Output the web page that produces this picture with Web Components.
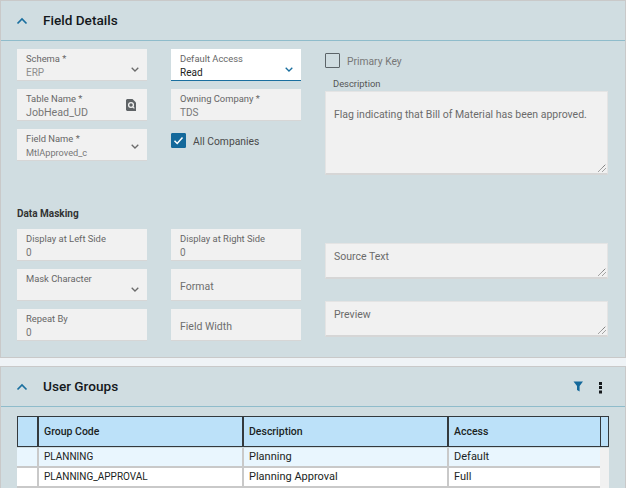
<!DOCTYPE html>
<html>
<head>
<meta charset="utf-8">
<title>Field Details</title>
<style>
    html, body { margin: 0; padding: 0; }
    body {
        background: #eff3f6;
        width: 626px;
        height: 488px;
        overflow: hidden;
        font-family: "Roboto", "Noto Sans", sans-serif;
    }
</style>
</head>
<body>
<template id="panel_template">
    <style>
        :host { display: block; background: #d0dde1; border: 1px solid #c9c9c9; }
        header { display: flex; align-items: center; height: 39px; border-bottom: 1px solid #8fbccb; padding: 0 15px 0 15px; }
        header svg.caret { width: 12px; height: 8px; margin-right: 15px; }
        h2 { margin: -2px 0 0; flex: 1; font-size: 13.6px; font-weight: 500; color: #14181c; }
        .content { padding: var(--content-top, 8px) 16px 16px; }
    </style>
    <header>
        <svg class="caret" viewBox="0 0 12 8"><path d="M1.5 6.5 6 2l4.5 4.5" fill="none" stroke="#1a6f9f" stroke-width="1.7"/></svg>
        <h2 id="title"></h2>
        <slot name="tools"></slot>
    </header>
    <div class="content"><slot></slot></div>
</template>

<template id="field_template">
    <style>
        :host { display: block; box-sizing: border-box; height: 32px; background: #f1f1f1; border-bottom: 1px solid #d6d6d6; position: relative; padding: 4px 9px; color: #6b6b6b; }
        :host([active]) { background: #fff; border-bottom: 1px solid #1a6f9f; }
        .label { font-size: 9.4px; line-height: 12px; margin-bottom: 1px; color: #666; white-space: nowrap; }
        .value { font-size: var(--value-size, 10px); line-height: 14px; margin-top: var(--value-gap, 0); color: var(--value-color, #777); white-space: nowrap; }
        :host([active]) .value { color: #222; }
        .big { font-size: 10.5px; color: #6e6e6e; line-height: 28px; white-space: nowrap; }
        svg { position: absolute; right: 8px; top: var(--chev-top, 18px); width: 8px; height: 5px; }
    </style>
    <div id="body"></div>
</template>

<template id="area_template">
    <style>
        :host { display: block; position: relative; box-sizing: border-box; background: #f1f1f1; border: 1px solid #e4e4e4; border-bottom: 2px solid #d6d6d6; padding: 6px 8px; font-size: 10.5px; line-height: 14px; color: #6b6b6b; }
        svg { position: absolute; right: 1px; bottom: 1px; width: 8px; height: 8px; }
    </style>
    <slot></slot>
    <svg viewBox="0 0 8 8"><path d="M.5 7.5 7.5.5M4.5 7.5l3-3" stroke="#555" stroke-width="1" stroke-dasharray="1 .6" fill="none"/></svg>
</template>

<template id="check_template">
    <style>
        :host { display: flex; align-items: center; gap: 7px; font-size: 10.3px; color: #4a4a4a; }
        .box { box-sizing: border-box; width: 15px; height: 15px; border: 1px solid #5c6468; border-radius: 1px; display: block; }
        :host([checked]) .box { background: #14699b; border-color: #14699b; }
        svg { display: block; width: 13px; height: 13px; }
        :host([disabled]) { color: #777; }
        .text { padding-top: 1px; }
    </style>
    <span class="box"><svg viewBox="0 0 13 13" id="tick"><path d="M2.5 6.8 5.2 9.5 10.5 3.5" fill="none" stroke="#fff" stroke-width="1.5"/></svg></span>
    <span class="text"><slot></slot></span>
</template>

<template id="grid_template">
    <style>
        :host { display: block; font-size: 11px; color: #1b1f23; width: 592px; }
        .row { display: grid; grid-template-columns: 20px 205px 205px 153px 9px; }
        .head { height: 31px; background: #bce1f9; border: 1px solid #33393d; box-sizing: border-box; grid-template-columns: 19px 205px 205px 153px 8px; font-size: 10.5px; }
        .head div { border-left: 2px solid #33393d; padding-left: 5px; line-height: 30px; font-weight: 500; box-sizing: border-box; }
        .head div:first-child { border-left: 0; }
        .head div:last-child { border-left-width: 1px; padding: 0; }
        .data { height: 20px; margin-top: 1px; box-sizing: border-box; }
        .data + .data { margin-top: 0; }
        .data div { border-left: 2px solid #c9c9c9; border-bottom: 2px solid #c9c9c9; padding-left: 5px; line-height: 17px; box-sizing: border-box; white-space: nowrap; background: var(--row); }
        .data div:first-child { border-left: 0; }
        .data div:nth-child(2) { font-size: 10px; }
        .data div:last-child { background: #f1f1f1; border: 0; padding: 0; }
        .tint { --row: #e9f6fe; }
        .plain { --row: #fff; }
    </style>
    <div class="row head"><div></div><div>Group Code</div><div>Description</div><div>Access</div><div></div></div>
    <div class="row data tint"><div></div><div>PLANNING</div><div>Planning</div><div>Default</div><div></div></div>
    <div class="row data plain"><div></div><div>PLANNING_APPROVAL</div><div>Planning Approval</div><div>Full</div><div></div></div>
</template>

<template id="details_template">
    <style>
        :host { display: grid; grid-template-columns: 130px 130px 283px; column-gap: 24px; }
        h3 { grid-column: 1 / 3; font-size: 10px; line-height: 14px; font-weight: 700; color: #333; margin: 32px 0 8px; }
        .stack { display: flex; flex-direction: column; gap: 8px; }
        .key { margin: 4px 0 0; }
        .desc-label { font-size: 9.4px; line-height: 12px; color: #555; margin: 10px 0 1px 8px; }
        .companies { margin-top: 4px; }
        .lower { padding-top: 14px; gap: 22px; }
    </style>
    <div class="stack">
        <form-field label="Schema *" value="ERP" select style="--value-color:#8e8e8e"></form-field>
        <form-field label="Table Name *" value="JobHead_UD" search style="--value-gap:1px;--value-size:10.7px"></form-field>
        <form-field label="Field Name *" value="MtlApproved_c" select style="--chev-top:15px;--value-size:9.2px"></form-field>
    </div>
    <div class="stack">
        <form-field label="Default Access" value="Read" select active></form-field>
        <form-field label="Owning Company *" value="TDS" style="--value-gap:1px"></form-field>
        <form-check class="companies" checked>All Companies</form-check>
    </div>
    <div>
        <form-check class="key" disabled>Primary Key</form-check>
        <div class="desc-label">Description</div>
        <form-area style="height:84px;padding-top:16px">Flag indicating that Bill of Material has been approved.</form-area>
    </div>
    <h3>Data Masking</h3>
    <div></div>
    <div class="stack">
        <form-field label="Display at Left Side" value="0"></form-field>
        <form-field label="Mask Character" value="" select></form-field>
        <form-field label="Repeat By" value="0"></form-field>
    </div>
    <div class="stack">
        <form-field label="Display at Right Side" value="0"></form-field>
        <form-field placeholder="Format"></form-field>
        <form-field placeholder="Field Width"></form-field>
    </div>
    <div class="stack lower">
        <form-area style="height:36px">Source Text</form-area>
        <form-area style="height:36px">Preview</form-area>
    </div>
</template>

<app-panel title="Field Details" style="height:358px;box-sizing:border-box">
    <field-details></field-details>
</app-panel>
<div style="height:8px"></div>
<app-panel title="User Groups" style="--content-top:9px">
    <svg slot="tools" width="38" height="14" viewBox="0 0 38 14" style="display:block">
        <path d="M1.5 1.5h9.5L7.6 6v5.5L5 10V6z" fill="#14699b"/>
        <rect x="27" y="2" width="3" height="3" fill="#15191c"/><rect x="27" y="6" width="3" height="3" fill="#15191c"/><rect x="27" y="10.5" width="3" height="3" fill="#15191c"/>
    </svg>
    <group-grid></group-grid>
</app-panel>

<script>
const chevron = '<svg viewBox="0 0 8 5"><path d="M.7.7 4 4l3.3-3.3" fill="none" stroke="#6b6b6b" stroke-width="1.3"/></svg>';
const chevron_blue = '<svg viewBox="0 0 8 5"><path d="M.7.7 4 4l3.3-3.3" fill="none" stroke="#1a6f9f" stroke-width="1.3"/></svg>';
const search_icon = '<svg viewBox="0 0 10 12" style="top:10px;right:11px;width:10px;height:12px"><path d="M0 1 1 0h5.5L10 3.5V12H1l-1-1z" fill="#5f6366"/><circle cx="5" cy="6" r="2.4" fill="none" stroke="#f1f1f1" stroke-width="1.3"/><path d="M6.8 7.8l1.6 1.6" stroke="#f1f1f1" stroke-width="1.2"/></svg>';

class ShadowBase extends HTMLElement {
    constructor(template_id) {
        super();
        this.attachShadow({ mode: 'open' });
        this.shadowRoot.appendChild(document.getElementById(template_id).content.cloneNode(true));
    }
}

class AppPanel extends ShadowBase {
    constructor() { super('panel_template'); }
    connectedCallback() {
        this.shadowRoot.getElementById('title').textContent = this.getAttribute('title');
    }
}

class FormField extends ShadowBase {
    constructor() { super('field_template'); }
    connectedCallback() {
        const body = this.shadowRoot.getElementById('body');
        if (this.hasAttribute('placeholder')) {
            body.innerHTML = `<div class="big">${this.getAttribute('placeholder')}</div>`;
            return;
        }
        let icon = '';
        if (this.hasAttribute('select')) icon = this.hasAttribute('active') ? chevron_blue : chevron;
        if (this.hasAttribute('search')) icon = search_icon;
        body.innerHTML = `<div class="label">${this.getAttribute('label')}</div><div class="value">${this.getAttribute('value')}</div>${icon}`;
    }
}

class FormArea extends ShadowBase {
    constructor() { super('area_template'); }
}

class FormCheck extends ShadowBase {
    constructor() { super('check_template'); }
    connectedCallback() {
        if (!this.hasAttribute('checked')) this.shadowRoot.getElementById('tick').style.display = 'none';
    }
}

class GroupGrid extends ShadowBase {
    constructor() { super('grid_template'); }
}

class FieldDetails extends ShadowBase {
    constructor() { super('details_template'); }
}

customElements.define('app-panel', AppPanel);
customElements.define('form-field', FormField);
customElements.define('form-area', FormArea);
customElements.define('form-check', FormCheck);
customElements.define('group-grid', GroupGrid);
customElements.define('field-details', FieldDetails);
</script>
</body>
</html>
